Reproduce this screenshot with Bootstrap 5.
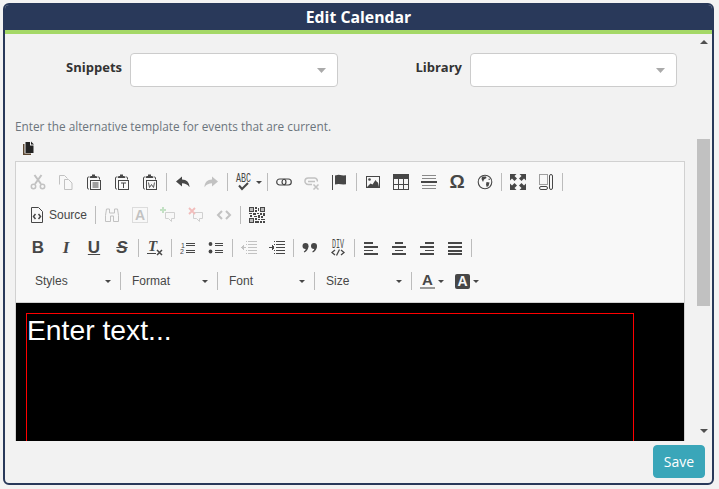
<!DOCTYPE html>
<html lang="en">
<head>
<meta charset="UTF-8" />
<title>Edit Calendar</title>
<link href="https://cdn.jsdelivr.net/npm/bootstrap@5.3.0/dist/css/bootstrap.min.css" rel="stylesheet" />
<style>
  html, body { height: 100%; }
  body { margin: 0; background: #f3f3f3; font-family: "Open Sans", sans-serif; overflow: hidden; }
  .dlg-frame { margin: 3px 0 0 3px; width: 711px; height: 482px; border: 2px solid #29395a; border-radius: 6px; background: #f2f2f2; }
  .dlg-title { height: 29px; background: #29395a; border-bottom: 4px solid #a5d867; color: #fff; font-size: 15.8px; font-weight: 700; line-height: 24px; text-align: center; }
  .dlg-scroll { height: 407px; overflow: hidden; }
  .dlg-foot { height: 42px; padding: 4px 7px 5px 0; }
  .btn-save { width: 52px; height: 33px; padding: 0; background: #3aa6b9; border-color: #3aa6b9; color: #fff; font-size: 14px; border-radius: 4px; }
  .fake-bar { top: 0; right: 2px; width: 13px; height: 407px; }
  .fake-thumb { top: 105px; left: 0; width: 13px; height: 167px; background: #c1c1c1; }
  .fake-up, .fake-down { left: 3px; width: 0; height: 0; border-left: 4px solid transparent; border-right: 4px solid transparent; }
  .fake-up { top: 6px; border-bottom: 4px solid #505050; }
  .fake-down { top: 395px; border-top: 4px solid #505050; }
  .pick-row { margin-top: 19px; }
  .pick-col { width: 340px; }
  .pick-label { width: 117px; font-size: 13px; font-weight: 700; color: #333; line-height: 28px; align-self: flex-start; }
  .pick-box { width: 208px; height: 34px; border: 1px solid #ccc; border-radius: 4px; background-color: #fff; background-position: right 11px center; background-size: 9px 5px; padding: 0;
    background-image: url("data:image/svg+xml,%3Csvg xmlns='http://www.w3.org/2000/svg' viewBox='0 0 9 5'%3E%3Cpath d='M0 0h9L4.500 5z' fill='%23aaa'/%3E%3C/svg%3E"); }
  .pick-col:last-child .pick-box { width: 207px; }
  .hint-text { margin: 30px 0 0 10px; font-size: 11.8px; line-height: 18px; color: #6c757d; }
  .copy-ico { display: block; margin: 6px 0 6px 17px; width: 14px; height: 14px; color: #222; }
  .ed-wrap { margin-left: 10px; width: 670px; border: 1px solid #d1d1d1; border-bottom: 0; }
  .ed-tools { height: 141px; background: #f8f8f8; padding: 6px 0 0 8px; border-bottom: 1px solid #d1d1d1; font-family: "Liberation Sans", sans-serif; font-size: 12px; color: #474747; }
  .tool-row { height: 28px; margin-bottom: 5px; }
  .tb-btn { width: 28px; height: 28px; flex: none; color: #474747; }
  .tb-btn svg { width: 16px; height: 16px; display: block; overflow: visible; }
  .tb-off { opacity: .3; }
  .tb-wide { width: 35px; padding-left: 6px; justify-content: flex-start !important; }
  .tb-src { width: 69px; padding-left: 5px; justify-content: flex-start !important; gap: 4px; }
  .tb-sep { width: 1px; height: 18px; margin: 0 2px; background: #bcbcbc; flex: none; }
  .tb-arrow { width: 0; height: 0; border-left: 3px solid transparent; border-right: 3px solid transparent; border-top: 3px solid #474747; flex: none; }
  .tb-combo { width: 92px; height: 28px; padding: 0 7px 0 9px; flex: none; }
  .tb-combo:first-child { margin-left: 2px; }
  .tb-text-b { font-size: 17px; font-weight: 700; }
  .tb-omega { font-size: 19px; }
  .tb-serif { font-family: "Liberation Serif", serif; }
  .tb-color { width: 35px; height: 28px; flex: none; padding-left: 6px; gap: 3px; justify-content: flex-start !important; }
  .tb-fore, .tb-back { width: 15px; font-size: 15px; font-weight: 700; text-align: center; flex: none; }
  .tb-fore { height: 16px; line-height: 13px; border-bottom: 2px solid #999; }
  .tb-back { height: 15px; line-height: 15px; font-size: 14px; background: #474747; color: #f8f8f8; border-radius: 2px; }
  .ed-area { height: 138px; background: #000; padding: 10px 0 0 10px; overflow: hidden; }
  .ed-page { width: 608px; height: 300px; border: 1px solid #f00; color: #fff; font-family: "Liberation Sans", sans-serif; font-size: 28.3px; line-height: 32px; }
</style>
</head>
<body>
<svg width="0" height="0" class="position-absolute">
  <defs>
    <symbol id="i-cut" viewBox="0 0 16 16"><path d="M5 10 11.500 1M11 10 4.500 1" stroke="currentColor" stroke-width="2" fill="none"/><circle cx="3.500" cy="12.500" r="2.200" stroke="currentColor" stroke-width="1.500" fill="none"/><circle cx="12.500" cy="12.500" r="2.200" stroke="currentColor" stroke-width="1.500" fill="none"/></symbol>
    <symbol id="i-copy" viewBox="0 0 16 16"><path d="M1.500 10.500v-9h5l3 3M6.500 5.500h4l3.500 3.500v6.500h-7.500z" stroke="currentColor" fill="none"/></symbol>
    <symbol id="i-board" viewBox="0 0 16 16"><path d="M3.500 3H2.500q-1 0-1 1v10q0 1 1 1H3M11.500 3h1q1 0 1 1v1.500" stroke="currentColor" fill="none"/><path d="M4 3q0-1 1-1h1V.5h3V2h1q1 0 1 1v1H4z" fill="currentColor"/><rect x="4.500" y="6.500" width="10" height="9" stroke="currentColor" fill="none"/></symbol>
    <symbol id="i-undo" viewBox="0 0 16 16"><path d="M7 2.500 1 7.500l6 5V9.300c3 0 5.500 1 7.500 4 0-5-3-7.800-7.500-7.800z" fill="currentColor"/></symbol>
    <symbol id="i-redo" viewBox="0 0 16 16"><path d="M9 2.500l6 5-6 5V9.300c-3 0-5.500 1-7.500 4 0-5 3-7.800 7.500-7.800z" fill="currentColor"/></symbol>
    <symbol id="i-link" viewBox="0 0 16 16"><rect x=".7" y="5" width="9.300" height="6" rx="3" stroke="currentColor" stroke-width="1.200" fill="none"/><rect x="6" y="5" width="9.300" height="6" rx="3" stroke="currentColor" stroke-width="1.200" fill="none"/></symbol>
    <symbol id="i-unlink" viewBox="0 0 16 16"><path d="M8 10.500H4.200a3 3 0 0 1 0-6.500h6.600a3 3 0 0 1 2.500 3.500M4 7.500h7" stroke="currentColor" stroke-width="1.500" fill="none"/><path d="M9.500 10.500l5 5m0-5-5 5" stroke="currentColor" stroke-width="1.500"/></symbol>
    <symbol id="i-flag" viewBox="0 0 16 16"><path d="M.5 1v15" stroke="currentColor"/><path d="M3 1.500 6.500.8l5 .7 2.500-.3v9l-2.500.3-5-.5-3.500.6z" fill="currentColor"/></symbol>
    <symbol id="i-image" viewBox="0 0 16 16"><rect x="1.500" y="2.500" width="13" height="11" stroke="currentColor" fill="none"/><circle cx="4.500" cy="5.500" r="1.300" fill="currentColor"/><path d="M2 13l3.500-3.500 2 1 3-4.500 1.500 2 1 .5 1 4.500z" fill="currentColor"/></symbol>
    <symbol id="i-table" viewBox="0 0 16 16" shape-rendering="crispEdges"><path d="M0 0h16v5H0z" fill="currentColor"/><path d="M.5 5v10.500h15V5M5.500 5v10M10.500 5v10M0 10.500h16" stroke="currentColor" fill="none"/></symbol>
    <symbol id="i-hr" viewBox="0 0 16 16" shape-rendering="crispEdges"><path d="M1 1h14v1H1zM1 4h14v1H1zM1 11h14v1H1zM1 14h14v1H1z" fill="#8a8a8a"/><path d="M0 7h16v2H0z" fill="currentColor"/></symbol>
    <symbol id="i-globe" viewBox="0 0 16 16"><circle cx="8" cy="8" r="6.800" stroke="currentColor" stroke-width="1.100" fill="none"/><path d="M5 2.500h4l.5 1.500L7 5.500 6 8 4.500 5zM9.500 8l3 .5-1 3.500-1.800 1-.7-2.500zM12 4l1 2-1.500 0z" fill="currentColor"/></symbol>
    <symbol id="i-max" viewBox="0 0 16 16"><path d="M0 0h6.500L4.500 2l2.500 2.500-2.500 2.500L2 4.500 0 6.500zM16 0H9.500l2 2L9 4.500l2.500 2.500L14 4.500l2 2zM0 16h6.500l-2-2L7 11.500 4.500 9 2 11.500l-2-2zM16 16H9.500l2-2L9 11.500 11.500 9l2.500 2.500 2-2z" fill="currentColor"/></symbol>
    <symbol id="i-blocks" viewBox="0 0 16 16"><rect x="1.500" y=".5" width="8" height="10" stroke="currentColor" stroke-dasharray="1 1" fill="none"/><rect x="1.500" y="12.500" width="8" height="3" rx="1.500" stroke="currentColor" fill="none"/><rect x="11.500" y=".5" width="3" height="15" rx="1.500" stroke="currentColor" fill="none"/></symbol>
    <symbol id="i-source" viewBox="0 0 16 16"><path d="M2.500 15.500V.5h7l4 4v11z" stroke="currentColor" fill="none"/><path d="M6.500 7 4.500 9.500l2 2.500M9.500 7l2 2.500-2 2.500" stroke="currentColor" stroke-width="1.500" fill="none"/></symbol>
    <symbol id="i-find" viewBox="0 0 16 16"><path d="M2.500 2h3v4h5V2h3l1 6.500v6h-5V9H6.500v5.500h-5v-6z" stroke="currentColor" fill="none"/></symbol>
    <symbol id="i-selall" viewBox="0 0 16 16"><rect x=".5" y=".5" width="15" height="15" stroke="currentColor" stroke-dasharray="1 1" fill="none"/><text x="8" y="13" text-anchor="middle" font-family="Liberation Sans, sans-serif" font-weight="700" font-size="14" fill="currentColor">A</text></symbol>
    <symbol id="i-cadd" viewBox="0 0 16 16"><path d="M5.500 5.500h9v6h-3v3l-3-3h-3z" stroke="#777" fill="none"/><path d="M2 0h2v2h2v2H4v2H2V4H0V2h2z" fill="#4caf50"/></symbol>
    <symbol id="i-cdel" viewBox="0 0 16 16"><path d="M5.500 5.500h9v6h-3v3l-3-3h-3z" stroke="#777" fill="none"/><path d="M1 1l6 6m0-6L1 7" stroke="#e53935" stroke-width="1.800"/></symbol>
    <symbol id="i-code" viewBox="0 0 16 16"><path d="M6 4 2 8l4 4M10 4l4 4-4 4" stroke="currentColor" stroke-width="2" fill="none"/></symbol>
    <symbol id="i-qr" viewBox="0 0 16 16" shape-rendering="crispEdges"><path d="M0 0h5v5H0zM11 0h5v5h-5zM0 11h5v5H0zM6 0h2v2H6zM9 1h1v3H9zM6 3h2v2H6zM0 6h3v1H0zM4 6h3v2H4zM8 6h2v1H8zM11 6h2v2h-2zM14 6h2v3h-2zM1 8h2v2H1zM5 9h3v1H5zM9 8h2v3H9zM12 9h2v2h-2zM6 11h2v2H6zM9 12h2v1H9zM12 12h4v1h-4zM6 14h4v2H6zM11 14h2v2h-2zM14 14h2v2h-2z" fill="currentColor"/><path d="M1 1h3v3H1zM12 1h3v3h-3zM1 12h3v3H1z" fill="#bbb"/></symbol>
    <symbol id="i-ol" viewBox="0 0 16 16" shape-rendering="crispEdges"><path d="M6 3h9v1H6zM6 5h9v1H6zM6 10h9v1H6zM6 12h9v1H6z" fill="currentColor"/><text x="1" y="7.500" font-family="Liberation Sans, sans-serif" font-size="7" fill="currentColor">1</text><text x="0" y="14" font-family="Liberation Sans, sans-serif" font-size="7" fill="currentColor">2</text></symbol>
    <symbol id="i-ul" viewBox="0 0 16 16"><circle cx="2.500" cy="4" r="1.900" fill="currentColor"/><circle cx="2.500" cy="11.500" r="1.900" fill="currentColor"/><path d="M7 3h8v1H7zM7 5h8v1H7zM7 10h8v1H7zM7 12h8v1H7z" fill="currentColor"/></symbol>
    <symbol id="i-outd" viewBox="0 0 16 16" shape-rendering="crispEdges"><path d="M7 1h9v1H7zM7 4h9v1H7zM7 7h9v1H7zM7 10h9v1H7zM7 13h9v1H7zM0 7h5v1H0zM1 6h1v3H1zM2 5h1v5H2z" fill="currentColor"/><path d="M5 1h1v1H5zM5 4h1v1H5zM5 10h1v1H5zM5 13h1v1H5z" fill="currentColor"/></symbol>
    <symbol id="i-ind" viewBox="0 0 16 16" shape-rendering="crispEdges"><path d="M7 1h9v1H7zM7 4h9v1H7zM7 7h9v1H7zM7 10h9v1H7zM7 13h9v1H7zM0 7h5v1H0zM4 6h1v3H4zM3 5h1v5H3z" fill="currentColor"/><path d="M5 1h1v1H5zM5 4h1v1H5zM5 10h1v1H5zM5 13h1v1H5z" fill="currentColor"/></symbol>
    <symbol id="i-quote" viewBox="0 0 16 16"><circle cx="3.500" cy="6" r="3" fill="currentColor"/><path d="M6.300 6c.2 3-1.500 5.500-4 6.500l-.5-1c1.500-1 2-2 2-3z" fill="currentColor"/><circle cx="12" cy="6" r="3" fill="currentColor"/><path d="M14.800 6c.2 3-1.500 5.500-4 6.500l-.5-1c1.500-1 2-2 2-3z" fill="currentColor"/></symbol>
    <symbol id="i-al" viewBox="0 0 16 16" shape-rendering="crispEdges"><path d="M1 2h9v2H1zM1 6h14v2H1zM1 10h9v1H1zM1 13h14v2H1z" fill="currentColor"/></symbol>
    <symbol id="i-ac" viewBox="0 0 16 16" shape-rendering="crispEdges"><path d="M4 2h8v2H4zM1 6h14v2H1zM4 10h8v1H4zM1 13h14v2H1z" fill="currentColor"/></symbol>
    <symbol id="i-ar" viewBox="0 0 16 16" shape-rendering="crispEdges"><path d="M6 2h9v2H6zM1 6h14v2H1zM6 10h9v1H6zM1 13h14v2H1z" fill="currentColor"/></symbol>
    <symbol id="i-aj" viewBox="0 0 16 16" shape-rendering="crispEdges"><path d="M1 2h14v2H1zM1 6h14v2H1zM1 10h14v2H1zM1 13h14v2H1z" fill="currentColor"/></symbol>
    <symbol id="i-clear" viewBox="0 0 16 16"><text x="1" y="11" font-family="Liberation Serif, serif" font-style="italic" font-weight="700" font-size="15" fill="currentColor">T</text><path d="M0 13h9v1H0z" fill="currentColor"/><path d="M10 10l5 5m0-5-5 5" stroke="currentColor" stroke-width="1.500"/></symbol>
  </defs>
</svg>

<div class="dlg-frame d-flex flex-column overflow-hidden">
  <div class="dlg-title">Edit Calendar</div>
  <div class="dlg-scroll position-relative">
    <div class="pick-row d-flex">
      <div class="pick-col d-flex gap-2">
        <label class="pick-label text-end">Snippets</label>
        <select class="pick-box form-select"></select>
      </div>
      <div class="pick-col d-flex gap-2">
        <label class="pick-label text-end">Library</label>
        <select class="pick-box form-select"></select>
      </div>
    </div>
    <div class="hint-text">Enter the alternative template for events that are current.</div>
    <svg class="copy-ico" viewBox="0 0 14 14"><path d="M1 3v11h8v-1.500H2.500V3z" fill="#5a4630"/><path d="M3.500 1H8v3.500h3.500V12h-8zM9 .5l3 3H9z" fill="currentColor"/></svg>
    <div class="ed-wrap">
      <div class="ed-tools">
        <div class="tool-row d-flex align-items-center">
          <span class="tb-btn tb-off d-flex align-items-center justify-content-center"><svg><use href="#i-cut"/></svg></span>
          <span class="tb-btn tb-off d-flex align-items-center justify-content-center"><svg><use href="#i-copy"/></svg></span>
          <span class="tb-btn d-flex align-items-center justify-content-center"><svg viewBox="0 0 16 16"><use href="#i-board"/><path d="M6.500 9h6M6.500 11h6M6.500 13h6" stroke="currentColor"/></svg></span>
          <span class="tb-btn d-flex align-items-center justify-content-center"><svg viewBox="0 0 16 16"><use href="#i-board"/><path d="M7 9h5M9.500 9v5" stroke="currentColor"/></svg></span>
          <span class="tb-btn d-flex align-items-center justify-content-center"><svg viewBox="0 0 16 16"><use href="#i-board"/><path d="M6.500 8.500l1 5 2-3 2 3 1-5" stroke="currentColor" stroke-width=".9" fill="none"/></svg></span>
          <span class="tb-sep"></span>
          <span class="tb-btn d-flex align-items-center justify-content-center"><svg><use href="#i-undo"/></svg></span>
          <span class="tb-btn tb-off d-flex align-items-center justify-content-center"><svg><use href="#i-redo"/></svg></span>
          <span class="tb-sep"></span>
          <span class="tb-btn tb-wide d-flex align-items-center gap-1"><svg viewBox="0 0 16 16"><text x="0" y="8" font-family="Liberation Mono, monospace" font-size="13" fill="currentColor" textLength="15" lengthAdjust="spacingAndGlyphs">ABC</text><path d="M3 11.500l3 3.500 6-6" stroke="currentColor" stroke-width="2" fill="none"/></svg><span class="tb-arrow"></span></span>
          <span class="tb-sep"></span>
          <span class="tb-btn d-flex align-items-center justify-content-center"><svg><use href="#i-link"/></svg></span>
          <span class="tb-btn tb-off d-flex align-items-center justify-content-center"><svg><use href="#i-unlink"/></svg></span>
          <span class="tb-btn d-flex align-items-center justify-content-center"><svg><use href="#i-flag"/></svg></span>
          <span class="tb-sep"></span>
          <span class="tb-btn d-flex align-items-center justify-content-center"><svg><use href="#i-image"/></svg></span>
          <span class="tb-btn d-flex align-items-center justify-content-center"><svg><use href="#i-table"/></svg></span>
          <span class="tb-btn d-flex align-items-center justify-content-center"><svg><use href="#i-hr"/></svg></span>
          <span class="tb-btn tb-text-b tb-omega d-flex align-items-center justify-content-center">Ω</span>
          <span class="tb-btn d-flex align-items-center justify-content-center"><svg><use href="#i-globe"/></svg></span>
          <span class="tb-sep"></span>
          <span class="tb-btn d-flex align-items-center justify-content-center"><svg><use href="#i-max"/></svg></span>
          <span class="tb-btn d-flex align-items-center justify-content-center"><svg><use href="#i-blocks"/></svg></span>
          <span class="tb-sep"></span>
        </div>
        <div class="tool-row d-flex align-items-center">
          <span class="tb-btn tb-src d-flex align-items-center"><svg><use href="#i-source"/></svg>Source</span>
          <span class="tb-sep"></span>
          <span class="tb-btn tb-off d-flex align-items-center justify-content-center"><svg><use href="#i-find"/></svg></span>
          <span class="tb-btn tb-off d-flex align-items-center justify-content-center"><svg><use href="#i-selall"/></svg></span>
          <span class="tb-btn tb-off d-flex align-items-center justify-content-center"><svg><use href="#i-cadd"/></svg></span>
          <span class="tb-btn tb-off d-flex align-items-center justify-content-center"><svg><use href="#i-cdel"/></svg></span>
          <span class="tb-btn tb-off d-flex align-items-center justify-content-center"><svg><use href="#i-code"/></svg></span>
          <span class="tb-sep"></span>
          <span class="tb-btn d-flex align-items-center justify-content-center"><svg><use href="#i-qr"/></svg></span>
        </div>
        <div class="tool-row d-flex align-items-center">
          <span class="tb-btn tb-text-b d-flex align-items-center justify-content-center">B</span>
          <span class="tb-btn tb-text-b tb-serif fst-italic d-flex align-items-center justify-content-center">I</span>
          <span class="tb-btn tb-text-b text-decoration-underline d-flex align-items-center justify-content-center">U</span>
          <span class="tb-btn tb-text-b fst-italic text-decoration-line-through d-flex align-items-center justify-content-center">S</span>
          <span class="tb-sep"></span>
          <span class="tb-btn d-flex align-items-center justify-content-center"><svg><use href="#i-clear"/></svg></span>
          <span class="tb-sep"></span>
          <span class="tb-btn d-flex align-items-center justify-content-center"><svg><use href="#i-ol"/></svg></span>
          <span class="tb-btn d-flex align-items-center justify-content-center"><svg><use href="#i-ul"/></svg></span>
          <span class="tb-sep"></span>
          <span class="tb-btn tb-off d-flex align-items-center justify-content-center"><svg><use href="#i-outd"/></svg></span>
          <span class="tb-btn d-flex align-items-center justify-content-center"><svg><use href="#i-ind"/></svg></span>
          <span class="tb-sep"></span>
          <span class="tb-btn d-flex align-items-center justify-content-center"><svg><use href="#i-quote"/></svg></span>
          <span class="tb-btn d-flex align-items-center justify-content-center"><svg viewBox="0 0 16 16"><text x="2" y="8" font-family="Liberation Mono, monospace" font-size="13" fill="currentColor" textLength="12" lengthAdjust="spacingAndGlyphs">DIV</text><path d="M5 10l-3 2.500L5 15M11 10l3 2.500L11 15M9.500 9.500 6.500 15.500" stroke="currentColor" stroke-width="1.300" fill="none"/></svg></span>
          <span class="tb-sep"></span>
          <span class="tb-btn d-flex align-items-center justify-content-center"><svg><use href="#i-al"/></svg></span>
          <span class="tb-btn d-flex align-items-center justify-content-center"><svg><use href="#i-ac"/></svg></span>
          <span class="tb-btn d-flex align-items-center justify-content-center"><svg><use href="#i-ar"/></svg></span>
          <span class="tb-btn d-flex align-items-center justify-content-center"><svg><use href="#i-aj"/></svg></span>
          <span class="tb-sep"></span>
        </div>
        <div class="tool-row d-flex align-items-center">
          <span class="tb-combo d-flex align-items-center justify-content-between">Styles<span class="tb-arrow"></span></span>
          <span class="tb-sep"></span>
          <span class="tb-combo d-flex align-items-center justify-content-between">Format<span class="tb-arrow"></span></span>
          <span class="tb-sep"></span>
          <span class="tb-combo d-flex align-items-center justify-content-between">Font<span class="tb-arrow"></span></span>
          <span class="tb-sep"></span>
          <span class="tb-combo d-flex align-items-center justify-content-between">Size<span class="tb-arrow"></span></span>
          <span class="tb-sep"></span>
          <span class="tb-color d-flex align-items-center"><span class="tb-fore">A</span><span class="tb-arrow"></span></span>
          <span class="tb-color d-flex align-items-center"><span class="tb-back">A</span><span class="tb-arrow"></span></span>
        </div>
      </div>
      <div class="ed-area">
        <div class="ed-page">Enter text...</div>
      </div>
    </div>
    <div class="fake-bar position-absolute">
      <div class="fake-up position-absolute"></div>
      <div class="fake-thumb position-absolute"></div>
      <div class="fake-down position-absolute"></div>
    </div>
  </div>
  <div class="dlg-foot d-flex justify-content-end align-items-start">
    <button type="button" class="btn btn-save">Save</button>
  </div>
</div>
<script src="https://cdn.jsdelivr.net/npm/bootstrap@5.3.0/dist/js/bootstrap.bundle.min.js"></script>
</body>
</html>
